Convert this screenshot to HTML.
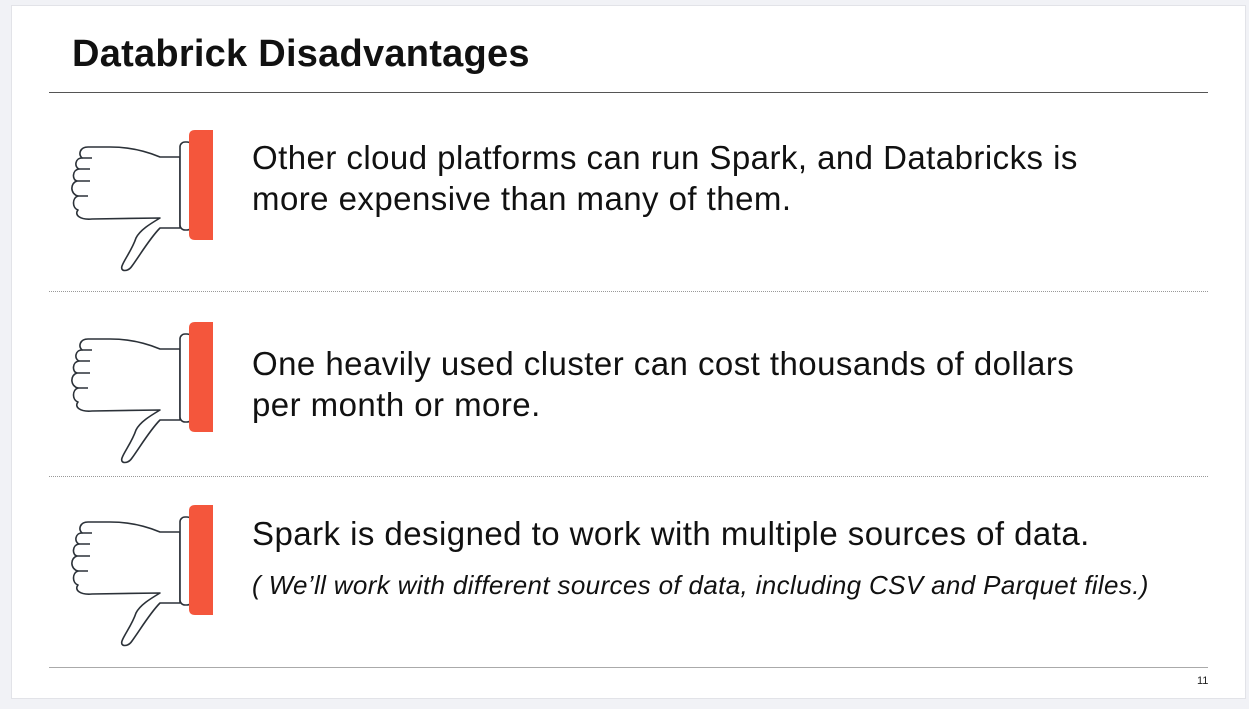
<!DOCTYPE html><html><head><style>
body{margin:0;width:1249px;height:709px;background:#f1f2f6;position:relative;overflow:hidden;font-family:"Liberation Sans",sans-serif}
.slide{position:absolute;left:11px;top:5px;width:1235px;height:694px;background:#fff;border:1px solid #e2e3e8;box-sizing:border-box}
.t{position:absolute;left:72px;top:33px;font-size:38px;font-weight:bold;color:#111;letter-spacing:0.25px}
.hr{position:absolute;left:49px;width:1159px;height:0}
.txt{position:absolute;left:252px;font-size:33px;line-height:41px;color:#111;letter-spacing:0.45px}
.it{position:absolute;left:252px;font-size:26px;font-style:italic;color:#111;letter-spacing:0.35px}
svg{position:absolute;left:60px}
</style></head><body><div class="slide"></div>
<div class="t">Databrick Disadvantages</div>
<div class="hr" style="top:92px;border-top:1.5px solid #555"></div>
<div class="hr" style="top:291px;border-top:1.5px dotted #999"></div>
<div class="hr" style="top:476px;border-top:1.5px dotted #999"></div>
<div class="hr" style="top:667px;border-top:1.5px solid #aaa"></div>
<div style="position:absolute;left:1197px;top:675px;font-size:11px;color:#222">11</div>
<svg width="170" height="160" style="top:120px" id="a"><g id="th">
<path d="M120 37 L100 37 C88 32 70 27 50 27 L28 27 C20 27 18 34 22 38 C15 38 14 47 19 49 C12 50 12 60 17 61 C10 63 10 74 18 76 C12 78 12 88 18 90 C14 95 20 100 32 99 L100 98 C90 104 80 110 76 118 C72 130 64 140 62 146 C60 152 68 152 72 146 C80 135 90 118 100 108 L120 108 Z" fill="#fff" stroke="#2b3138" stroke-width="1.6" stroke-linejoin="round"/>
<path d="M22 38 L32 38 M19 49 L30 49 M17 61 L30 61 M18 76 L28 76" stroke="#2b3138" stroke-width="1.4" fill="none"/>
<rect x="120" y="22" width="12" height="88" rx="5" fill="#fff" stroke="#2b3138" stroke-width="1.6"/>
<path d="M135 10 L153 10 L153 120 L135 120 Q129 120 129 114 L129 16 Q129 10 135 10Z" fill="#f4563c"/></g></svg>
<svg width="170" height="160" style="top:312px"><use href="#th"/></svg>
<svg width="170" height="160" style="top:495px"><use href="#th"/></svg>
<div class="txt" style="top:137px">Other cloud platforms can run Spark, and Databricks is<br>more expensive than many of them.</div>
<div class="txt" style="top:343px">One heavily used cluster can cost thousands of dollars<br>per month or more.</div>
<div class="txt" style="top:513px">Spark is designed to work with multiple sources of data.</div>
<div class="it" style="top:570px">( We’ll work with different sources of data, including CSV and Parquet files.)</div>
</body></html>
